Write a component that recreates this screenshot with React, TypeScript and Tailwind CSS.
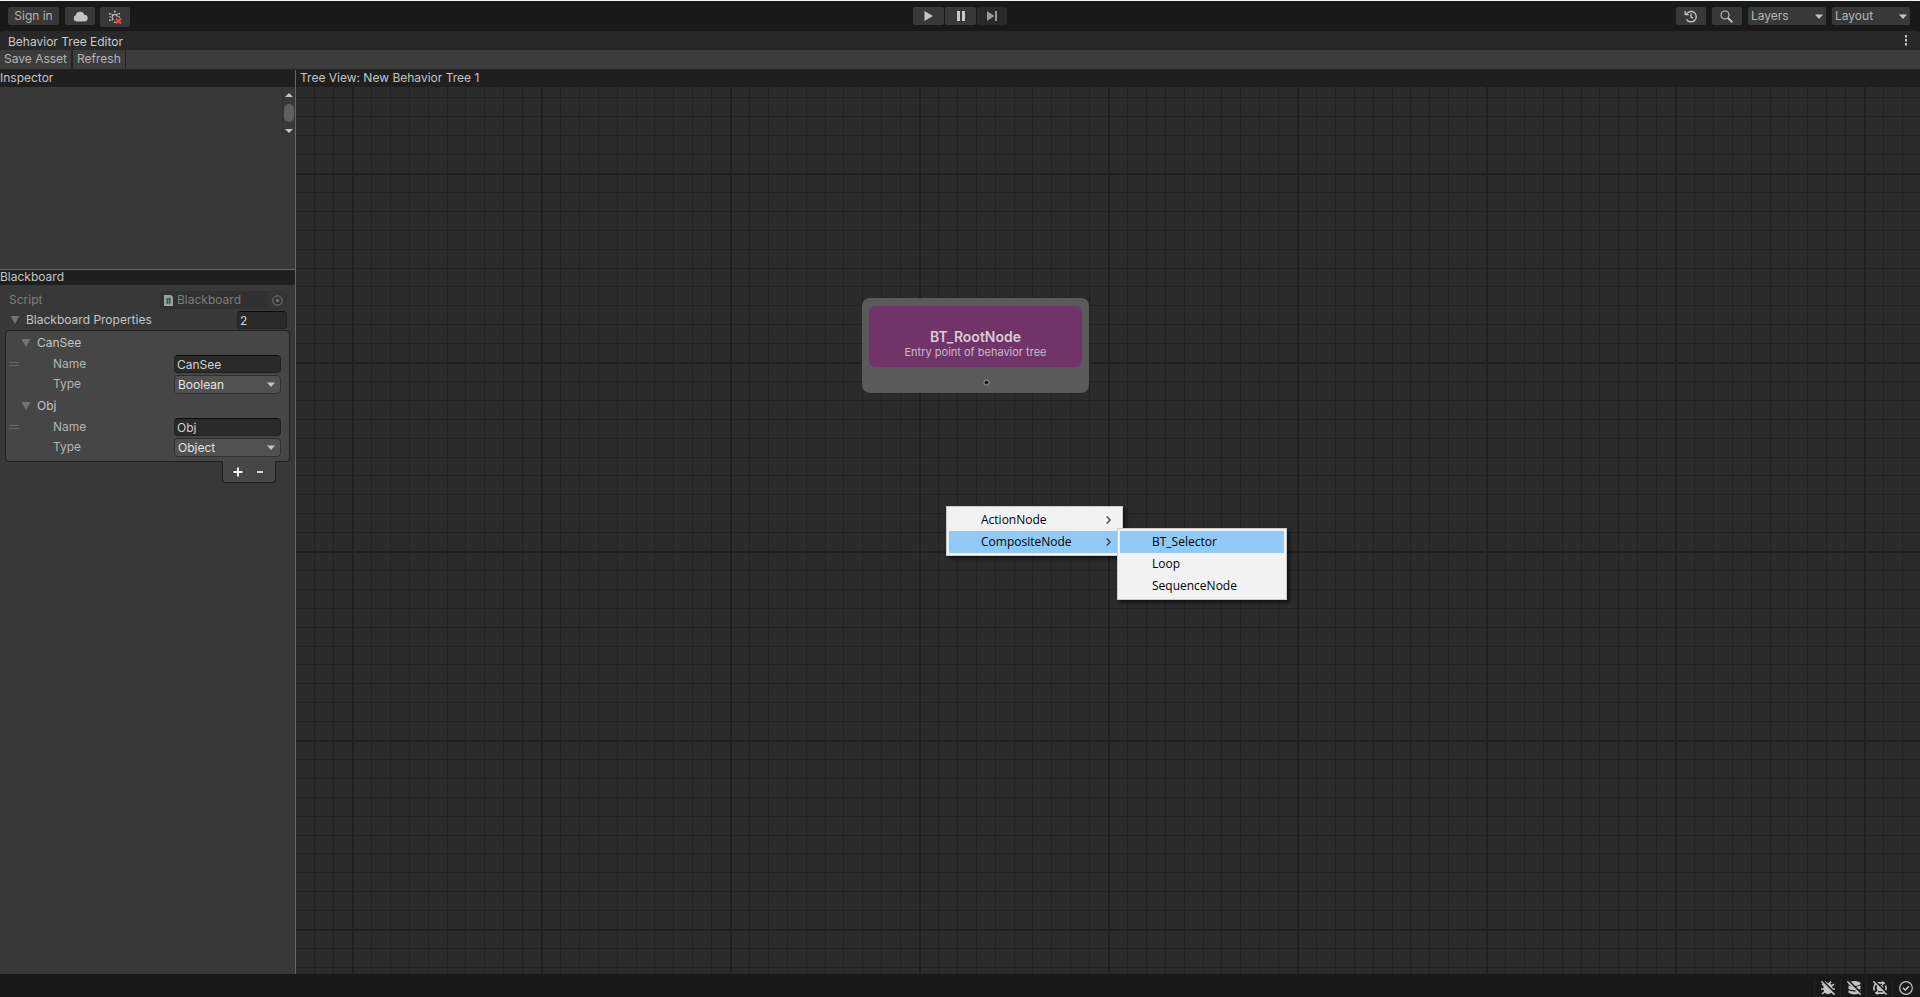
import type { ReactNode } from "react";

const MINOR_STEPS = [19, 38, 57, 76, 95, 113, 132, 151, 170];

function Caret({ className = "" }: { className?: string }) {
  return (
    <svg className={className} width="8" height="5" viewBox="0 0 8 5" aria-hidden="true">
      <path d="M0 0.500h8L4 5z" fill="#c4c4c4" />
    </svg>
  );
}

function ToolButton({ label, className, children }: { label: string; className: string; children: ReactNode }) {
  return (
    <button type="button" aria-label={label} className={`flex h-[18px] items-center justify-center rounded-xs ${className}`}>
      {children}
    </button>
  );
}

function ToolSelect({ label }: { label: string }) {
  return (
    <div className="relative flex h-[18px] w-[78px] items-center rounded-xs bg-[#383838]">
      <select aria-label={label} className="h-full w-full appearance-none bg-transparent pl-[3px] leading-4 outline-none">
        <option>{label}</option>
      </select>
      <Caret className="pointer-events-none absolute right-[3px]" />
    </div>
  );
}

function TopBar() {
  return (
    <header className="grid h-[31px] grid-cols-[1fr_auto_1fr] items-start border-t border-[#f0f4f3] bg-[#191919] pt-1.5">
      <div className="flex items-start gap-1.5 pl-2">
        <button type="button" className="h-[18px] w-[51px] rounded-xs bg-[#383838] leading-[18px] text-[#b4b4b4]">
          Sign in
        </button>
        <ToolButton label="Cloud" className="w-[30px] bg-[#383838]">
          <svg width="15" height="11" viewBox="0 0 15 11" fill="#c4c4c4" aria-hidden="true">
            <path d="M3.600 10.500A3.200 3.200 0 0 1 2.800 4.300 4.400 4.400 0 0 1 11.300 3.700 3.400 3.400 0 0 1 11.300 10.500z" />
          </svg>
        </ToolButton>
        <button type="button" aria-label="Version control" className="-ml-px flex h-5 w-[30px] items-center justify-center rounded-xs bg-[#383838]">
          <svg width="14" height="14" viewBox="0 0 14 14" aria-hidden="true">
            <path
              d="M1 3h1.600v1.600H1zM1.500 6.200h1.400v1.400H1.500zM1 9.500h1.600v1.600H1zM6 0.800h1.600v1.600H6zM10.500 3H12v1.600h-1.500zM10.500 6.200H12v1.400h-1.500zM6 11.500h1.600V13H6z"
              fill="#c4c4c4"
            />
            <path d="M5.500 9.500a2.600 2.600 0 1 1 3.800-2.500M4.600 5l-1-1.200M8.600 4.800l1-1.200M4.800 9.300l-1.200 1.200" fill="none" stroke="#c4c4c4" strokeWidth="1.100" />
            <path d="M8 8.500l5 5M13 8.500l-5 5" stroke="#f04a3e" strokeWidth="2" />
          </svg>
        </button>
      </div>
      <div className="flex gap-px">
        <ToolButton label="Play" className="w-[31px] bg-[#383838]">
          <svg width="9" height="10" viewBox="0 0 9 10" aria-hidden="true">
            <path d="M0.500 0L9 5 0.500 10z" fill="#c8c8c8" />
          </svg>
        </ToolButton>
        <ToolButton label="Pause" className="w-[31px] bg-[#383838]">
          <svg width="8" height="10" viewBox="0 0 8 10" aria-hidden="true">
            <path d="M0 0h3v10H0zM5 0h3v10H5z" fill="#c8c8c8" />
          </svg>
        </ToolButton>
        <ToolButton label="Step" className="w-[30px] bg-[#292929]">
          <svg width="10" height="10" viewBox="0 0 10 10" aria-hidden="true">
            <path d="M0 0L7.500 5 0 10zM8 0h2v10H8z" fill="#999999" />
          </svg>
        </ToolButton>
      </div>
      <div className="flex justify-end gap-1.5 pr-2.5 text-[#b4b4b4]">
        <ToolButton label="Undo history" className="w-[30px] bg-[#383838]">
          <svg width="14" height="13" viewBox="0 0 14 13" fill="none" stroke="#c4c4c4" strokeWidth="1.400" aria-hidden="true">
            <path d="M2.600 4A5.200 5.200 0 1 1 2.600 9.300M1.200 1.300V4.600H4.800M7 3.500V7l2 1.200" />
          </svg>
        </ToolButton>
        <ToolButton label="Search" className="w-[30px] bg-[#383838]">
          <svg width="14" height="13" viewBox="0 0 14 13" fill="none" stroke="#c4c4c4" aria-hidden="true">
            <circle cx="5" cy="5" r="4" strokeWidth="1.100" />
            <path d="M8 8l4.300 4.300" strokeWidth="1.800" />
          </svg>
        </ToolButton>
        <ToolSelect label="Layers" />
        <ToolSelect label="Layout" />
      </div>
    </header>
  );
}

function Foldout({ children, className = "" }: { children: ReactNode; className?: string }) {
  return (
    <button type="button" className={`flex items-center gap-1.5 ${className}`}>
      <svg width="10" height="8" viewBox="0 0 10 8" aria-hidden="true">
        <path d="M0.500 0h9L5 8z" fill="#727272" />
      </svg>
      {children}
    </button>
  );
}

function PropertyItem({ name, type }: { name: string; type: string }) {
  return (
    <div className="pb-px">
      <Foldout className="h-6 pl-[15px] text-[#c4c4c4]">{name}</Foldout>
      <div className="flex h-5 items-start">
        <svg className="mt-[7px] ml-[3px]" width="10" height="4" viewBox="0 0 10 4" aria-hidden="true">
          <path d="M0 0h10v1H0zM0 3h10v1H0z" fill="#686868" />
        </svg>
        <label htmlFor={`${name}-name`} className="ml-[34px] w-[121px] leading-[18px]">
          Name
        </label>
        <input
          id={`${name}-name`}
          defaultValue={name}
          className="h-[18px] w-[107px] rounded-sm border border-[#212121] border-t-[#0d0d0d] bg-[#2a2a2a] px-0.5 text-[#d2d2d2] outline-none"
        />
      </div>
      <div className="flex h-[18px] items-start">
        <label htmlFor={`${name}-type`} className="ml-[47px] w-[121px] leading-[18px]">
          Type
        </label>
        <div className="relative flex h-[19px] w-[107px] items-center rounded-sm border border-[#303030] bg-[#515151]">
          <select
            id={`${name}-type`}
            className="h-full w-full appearance-none bg-transparent pl-[3px] leading-4 text-[#e4e4e4] outline-none"
          >
            <option>{type}</option>
          </select>
          <Caret className="pointer-events-none absolute right-[5px]" />
        </div>
      </div>
    </div>
  );
}

function Sidebar() {
  return (
    <aside className="flex w-[296px] shrink-0 flex-col border-r border-[#666666] bg-[#383838] leading-4">
      <h2 className="h-[17px] bg-[#1f1f1f] text-[#c4c4c4]">Inspector</h2>
      <div className="flex h-[182px] justify-end">
        <div className="flex h-[52px] w-[13px] flex-col items-center justify-between border-l border-[#303030] py-1.5">
          <svg width="8" height="4" viewBox="0 0 8 4" aria-hidden="true">
            <path d="M0 4L4 0l4 4z" fill="#c4c4c4" />
          </svg>
          <div className="h-[18px] w-2.5 rounded-full bg-[#5f5f5f]" />
          <svg width="8" height="4" viewBox="0 0 8 4" aria-hidden="true">
            <path d="M0 0h8L4 4z" fill="#c4c4c4" />
          </svg>
        </div>
      </div>
      <h2 className="h-4 border-t border-[#666666] bg-[#1f1f1f] leading-[14px] text-[#c4c4c4]">Blackboard</h2>
      <div className="flex flex-col pt-1.5">
        <div className="flex h-5 items-start justify-between pr-2 pl-[9px] text-[#7c7c7c]">
          <span className="leading-[18px]">Script</span>
          <div className="flex h-[18px] w-[127px] items-center rounded-sm border border-[#303030] bg-[#313131]">
            <svg className="ml-[3px]" width="9" height="11" viewBox="0 0 9 11" aria-hidden="true">
              <path d="M0 0h7l2 2v9H0z" fill="#9a9f9c" />
              <path d="M4 2.500L3.200 9M6 2.500L5.200 9M2 4.500h5M2 7h5" stroke="#285c35" strokeWidth="1" />
            </svg>
            <span className="ml-1">Blackboard</span>
            <button type="button" aria-label="Select object" className="ml-auto flex h-full w-[18px] items-center justify-center bg-[#353535]">
              <svg width="11" height="11" viewBox="0 0 11 11" aria-hidden="true">
                <circle cx="5.500" cy="5.500" r="4.700" fill="none" stroke="#7c7c7c" />
                <circle cx="5.500" cy="5.500" r="1.500" fill="#7c7c7c" />
              </svg>
            </button>
          </div>
        </div>
        <div className="flex h-[19px] items-start justify-between pr-2 pl-2.5">
          <Foldout className="h-[18px] text-[#c4c4c4]">Blackboard Properties</Foldout>
          <input
            aria-label="Property count"
            defaultValue="2"
            className="h-[18px] w-[50px] rounded-sm border border-[#212121] border-t-[#0d0d0d] bg-[#2a2a2a] px-0.5 text-[#d2d2d2] outline-none"
          />
        </div>
        <div className="mx-[5px] rounded-sm border border-[#1f1f1f] bg-[#464646] pb-1">
          <PropertyItem name="CanSee" type="Boolean" />
          <PropertyItem name="Obj" type="Object" />
        </div>
        <div className="relative -mt-px mr-[19px] flex h-[22px] w-[54px] items-center justify-center gap-3 self-end rounded-b-sm border border-t-0 border-[#1f1f1f] bg-[#464646]">
          <button type="button" aria-label="Add property">
            <svg width="10" height="10" viewBox="0 0 10 10" aria-hidden="true">
              <path d="M4 0.500h2V4h3.500v2H6v3.500H4V6H0.500V4H4z" fill="#f0f0f0" />
            </svg>
          </button>
          <button type="button" aria-label="Remove property">
            <svg width="10" height="10" viewBox="0 0 10 10" aria-hidden="true">
              <path d="M2 4h6v2H2z" fill="#d8d8d8" />
            </svg>
          </button>
        </div>
      </div>
    </aside>
  );
}

function CanvasGrid() {
  return (
    <svg className="absolute inset-0 h-full w-full" aria-hidden="true">
      <defs>
        <pattern id="grid" x="56" y="86" width="189" height="189" patternUnits="userSpaceOnUse">
          {MINOR_STEPS.map((step) => (
            <g key={step} fill="#222222">
              <rect x={step} y="0" width="1" height="189" />
              <rect x="0" y={step} width="189" height="1" />
            </g>
          ))}
          <path d="M0 0h189v2H0zM0 0h2v189H0z" fill="#1f1f1f" />
        </pattern>
      </defs>
      <rect width="100%" height="100%" fill="url(#grid)" />
    </svg>
  );
}

function MenuItem({ label, active = false, submenu = false }: { label: string; active?: boolean; submenu?: boolean }) {
  return (
    <button
      type="button"
      role="menuitem"
      className={`flex h-[22px] w-full items-center justify-between pr-[9px] pl-8 ${active ? "bg-[#91c9f7]" : ""}`}
    >
      {label}
      {submenu && (
        <svg width="5" height="8" viewBox="0 0 5 8" fill="none" stroke="#333333" strokeWidth="1.200" aria-hidden="true">
          <path d="M0.700 0.500L4.200 4 0.700 7.500" />
        </svg>
      )}
    </button>
  );
}

function Menu({ className, children }: { className: string; children: ReactNode }) {
  return (
    <div
      role="menu"
      className={`absolute border border-[#cccccc] bg-[#f2f2f2] p-0.5 font-['Open_Sans','Noto_Sans',sans-serif] text-xs text-black shadow-[3px_3px_3px_rgba(0,0,0,0.5)] ${className}`}
    >
      {children}
    </div>
  );
}

function TreeView() {
  return (
    <main className="flex min-w-0 flex-1 flex-col">
      <h2 className="h-[17px] bg-[#1f1f1f] pl-1 leading-4 text-[#c4c4c4]">Tree View: New Behavior Tree 1</h2>
      <div className="relative flex-1 overflow-hidden bg-[#2b2b2b]">
        <CanvasGrid />
        <div className="absolute top-[211px] left-[566px] h-[95px] w-[227px] rounded-lg bg-[#5a5a5a] px-[7px] pt-2">
          <div className="flex h-[61px] flex-col items-center justify-end rounded-md bg-[#713468] pb-2">
            <h3 className="text-sm leading-4 font-semibold text-[#d8ccd6]">BT_RootNode</h3>
            <p className="text-[11px] leading-[14px] text-[#cbb9c8]">Entry point of behavior tree</p>
          </div>
          <svg className="mt-3 ml-[114px]" width="7" height="7" viewBox="0 0 7 7" aria-hidden="true">
            <circle cx="3.500" cy="3.500" r="2.600" fill="#1c1c1c" stroke="#a0a0a0" />
          </svg>
        </div>
        <Menu className="top-[419px] left-[650px] w-[177px]">
          <MenuItem label="ActionNode" submenu />
          <MenuItem label="CompositeNode" submenu active />
        </Menu>
        <Menu className="top-[441px] left-[821px] w-[170px]">
          <MenuItem label="BT_Selector" active />
          <MenuItem label="Loop" />
          <MenuItem label="SequenceNode" />
        </Menu>
      </div>
    </main>
  );
}

function StatusButton({ label, children }: { label: string; children: ReactNode }) {
  return (
    <button type="button" aria-label={label} className="flex h-[18px] w-[26px] items-center justify-center border-l border-[#232323]">
      {children}
    </button>
  );
}

function Slash() {
  return (
    <>
      <path d="M1.500 -0.500L15 13" stroke="#191919" strokeWidth="1.800" />
      <path d="M0.300 0.300l13.400 13.400" stroke="#c4c4c4" strokeWidth="1.500" />
    </>
  );
}

function StatusBar() {
  return (
    <footer className="flex h-[23px] items-center justify-end bg-[#191919] pt-1 pr-0.5">
      <StatusButton label="Debug mode">
        <svg width="14" height="14" viewBox="0 0 14 14" aria-hidden="true">
          <ellipse cx="7" cy="7.500" rx="4.600" ry="5.800" fill="#c4c4c4" />
          <path d="M1 3l3 2.500M13 3l-3 2.500M0 8H14M1 13L4 10.500M13 13L10 10.500M4 0.500L6 3M10 0.500L8 3" stroke="#c4c4c4" strokeWidth="1.600" />
          <Slash />
        </svg>
      </StatusButton>
      <StatusButton label="Cache server">
        <svg width="14" height="14" viewBox="0 0 14 14" fill="#c4c4c4" aria-hidden="true">
          <ellipse cx="7.500" cy="2.600" rx="6" ry="2.500" />
          <path d="M1.500 4.600q6 2.600 12 0v3.300q-6 2.600-12 0zM1.500 9.200q6 2.600 12 0v2.600q-6 3.600-12 0z" />
          <Slash />
        </svg>
      </StatusButton>
      <StatusButton label="Auto refresh">
        <svg width="14" height="14" viewBox="0 0 14 14" aria-hidden="true">
          <path d="M1.500 9.500A6 6 0 0 1 4 1.800H10M12.500 4.500A6 6 0 0 1 10 12.200H4" fill="none" stroke="#c4c4c4" strokeWidth="1.700" />
          <path d="M9 0v4.500L12.500 2zM5 14V9.500L1.500 12z" fill="#c4c4c4" />
          <circle cx="7" cy="7" r="3.300" fill="#c4c4c4" />
          <Slash />
        </svg>
      </StatusButton>
      <StatusButton label="Progress">
        <svg width="14" height="14" viewBox="0 0 14 14" fill="none" stroke="#c4c4c4" aria-hidden="true">
          <circle cx="7" cy="7" r="6.300" strokeWidth="1.200" />
          <path d="M4 6.800l2.300 2.300L10 5.300" strokeWidth="1.500" />
        </svg>
      </StatusButton>
    </footer>
  );
}

export default function App() {
  return (
    <div className="flex min-h-screen flex-col bg-[#191919] font-['Inter',sans-serif] text-xs text-[#b4b4b4]">
      <TopBar />
      <div className="flex h-[19px] items-center justify-between rounded-t-sm bg-[#282828] pr-3 pl-2">
        <h1 className="pt-0.5 leading-4 text-[#c8c8c8]">Behavior Tree Editor</h1>
        <button type="button" aria-label="Window menu">
          <svg width="4" height="11" viewBox="0 0 4 11" fill="#c4c4c4" aria-hidden="true">
            <path d="M1 0h2v2.500H1zM1 4h2v2.500H1zM1 8h2v2.500H1z" />
          </svg>
        </button>
      </div>
      <nav className="flex h-5 border-b border-[#232323] bg-[#3c3c3c] leading-4">
        <button type="button" className="h-full border-r-2 border-[#232323] px-1 pb-0.5">
          Save Asset
        </button>
        <button type="button" className="h-full border-r border-[#232323] px-1 pb-0.5">
          Refresh
        </button>
      </nav>
      <div className="flex flex-1">
        <Sidebar />
        <TreeView />
      </div>
      <StatusBar />
    </div>
  );
}
